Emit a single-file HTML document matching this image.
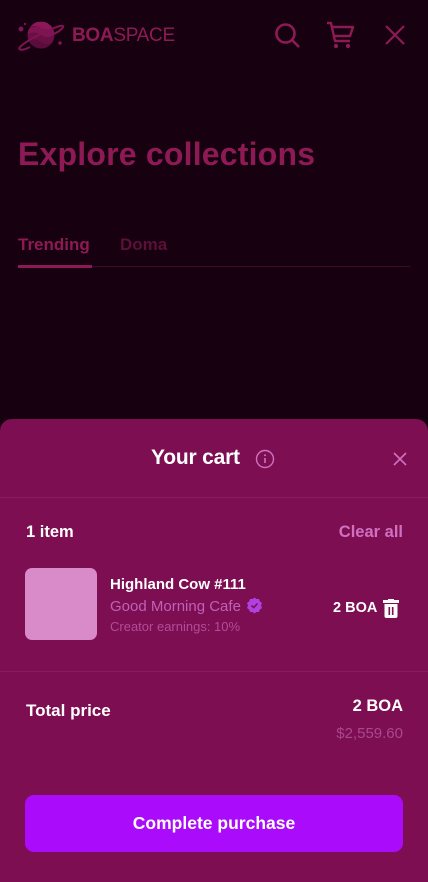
<!DOCTYPE html>
<html><head><meta charset="utf-8"><style>
*{margin:0;padding:0;box-sizing:border-box}
html,body{width:428px;height:882px;overflow:hidden}
body{background:#170010;font-family:"Liberation Sans",sans-serif;position:relative}
.abs{position:absolute}
</style></head><body>
<svg class="abs" style="left:16px;top:18px" width="50" height="34" viewBox="0 0 50 34">
<defs><clipPath id="c"><circle cx="25" cy="17" r="13.5"/></clipPath></defs>
<circle cx="25" cy="17" r="13.5" fill="#6a0f45"/>
<g clip-path="url(#c)">
<path d="M10 10 Q18 6 25 10 T40 9 V4 H10Z" fill="#8c1858"/>
<path d="M10 17 Q18 12 25 17 T40 15 V10 Q32 13 25 10 T10 12Z" fill="#7e1452"/>
<path d="M10 24 Q18 19 25 24 T40 22 V30 H10Z" fill="#5a0c3c"/>
</g>
<path d="M3 30 Q10 22 38 10 Q48 6 47 9 Q46 12 38 16" stroke="#7e1452" stroke-width="2" fill="none"/>
<path d="M3 30 Q4 34 14 29" stroke="#7e1452" stroke-width="2" fill="none"/>
<circle cx="5" cy="11" r="2.5" fill="#7e1452"/><circle cx="9" cy="6" r="1.2" fill="#7e1452"/><circle cx="44" cy="25" r="1.8" fill="#7e1452"/>
</svg>
<div class="abs" style="left:72px;top:25px;font-size:19px;color:#8e1a55;letter-spacing:-0.3px"><b>BOA</b>SPACE</div>
<svg class="abs" style="left:273px;top:21px" width="28" height="28" viewBox="0 0 28 28"><circle cx="12.5" cy="12.5" r="9" stroke="#8e1a55" stroke-width="2.6" fill="none"/><path d="M19 19 L26 26" stroke="#8e1a55" stroke-width="2.6"/></svg>
<svg class="abs" style="left:325px;top:20px" width="30" height="30" viewBox="0 0 30 30"><path d="M2 3 H6 L10 21 H25 M7 7 H28 L25 16 H9" stroke="#8e1a55" stroke-width="2.4" fill="none" stroke-linejoin="round"/><circle cx="11" cy="26" r="2.2" fill="#8e1a55"/><circle cx="23" cy="26" r="2.2" fill="#8e1a55"/></svg>
<svg class="abs" style="left:384px;top:24px" width="22" height="22" viewBox="0 0 22 22"><path d="M2 2 L20 20 M20 2 L2 20" stroke="#8e1a55" stroke-width="2.2"/></svg>
<div class="abs" style="left:18px;top:136px;font-size:32px;font-weight:bold;color:#8e1a55;letter-spacing:0.2px">Explore collections</div>
<div class="abs" style="left:18px;top:235px;font-size:17px;font-weight:bold;color:#8e1a55">Trending</div>
<div class="abs" style="left:120px;top:235px;font-size:17px;font-weight:bold;color:#5c0f38">Doma</div>
<div class="abs" style="left:18px;top:266px;width:392px;height:1px;background:#3d0a26"></div>
<div class="abs" style="left:18px;top:265px;width:74px;height:3px;background:#8e1a55"></div>
<div class="abs" style="left:0;top:419px;width:428px;height:463px;background:#7e0e52;border-radius:12px 12px 0 0"></div>
<div class="abs" style="left:151px;top:446px;color:#fff;font-size:21px;font-weight:bold;letter-spacing:-0.2px">Your cart</div>
<svg class="abs" style="left:255px;top:449px" width="20" height="20" viewBox="0 0 20 20"><circle cx="10" cy="10" r="8.5" stroke="#d070c0" stroke-width="1.4" fill="none"/><path d="M10 9 V14" stroke="#d070c0" stroke-width="1.6"/><circle cx="10" cy="6.3" r="1" fill="#d070c0"/></svg>
<svg class="abs" style="left:393px;top:452px" width="14" height="14" viewBox="0 0 14 14"><path d="M1 1 L13 13 M13 1 L1 13" stroke="#d070c0" stroke-width="1.6"/></svg>
<div class="abs" style="left:0;top:497px;width:428px;height:1px;background:#8a1a5c"></div>
<div class="abs" style="left:26px;top:523px;font-size:16.5px;font-weight:bold;color:#fff">1 item</div>
<div class="abs" style="right:25px;top:523px;font-size:16.5px;font-weight:bold;color:#d070c0">Clear all</div>
<div class="abs" style="left:25px;top:568px;width:72px;height:72px;border-radius:7px;background:#d98ac8"></div>
<div class="abs" style="left:110px;top:576px;font-size:15px;font-weight:bold;color:#fff">Highland Cow #111</div>
<div class="abs" style="left:110px;top:598px;font-size:15px;color:#c060b8">Good Morning Cafe</div>
<svg class="abs" style="left:246px;top:597px" width="17" height="17" viewBox="0 0 17 17"><path d="M8.5 0.5 L10.5 2 L13 2 L13.8 4.4 L16 6 L15 8.5 L16 11 L13.8 12.6 L13 15 L10.5 15 L8.5 16.5 L6.5 15 L4 15 L3.2 12.6 L1 11 L2 8.5 L1 6 L3.2 4.4 L4 2 L6.5 2Z" fill="#b040e0"/><path d="M5.5 8.5 L7.7 10.5 L11.5 6.5" stroke="#7e0e52" stroke-width="1.6" fill="none"/></svg>
<div class="abs" style="left:110px;top:619px;font-size:13px;color:#b04c9a">Creator earnings: 10%</div>
<div class="abs" style="left:333px;top:600px;font-size:14.5px;font-weight:bold;color:#fff">2 BOA</div>
<svg class="abs" style="left:383px;top:599px" width="16" height="19" viewBox="0 0 16 19"><rect x="0" y="1" width="16" height="3" fill="#fff"/><rect x="5" y="0" width="6" height="2" fill="#fff"/><path d="M1.5 5 H14.5 V17 Q14.5 19 12.5 19 H3.5 Q1.5 19 1.5 17Z" fill="#fff"/><rect x="5.5" y="8" width="1.6" height="8" fill="#7e0e52"/><rect x="8.9" y="8" width="1.6" height="8" fill="#7e0e52"/></svg>
<div class="abs" style="left:0;top:671px;width:428px;height:1px;background:#8a1a5c"></div>
<div class="abs" style="left:26px;top:701px;font-size:17px;font-weight:bold;color:#fff">Total price</div>
<div class="abs" style="right:25px;top:697px;font-size:16.5px;font-weight:bold;color:#fff">2 BOA</div>
<div class="abs" style="right:25px;top:725px;font-size:15px;color:#a8488e">$2,559.60</div>
<div class="abs" style="left:25px;top:795px;width:378px;height:57px;border-radius:9px;background:#aa0cfb;color:#fff;font-size:17.5px;font-weight:bold;text-align:center;line-height:57px">Complete purchase</div>
</body></html>
